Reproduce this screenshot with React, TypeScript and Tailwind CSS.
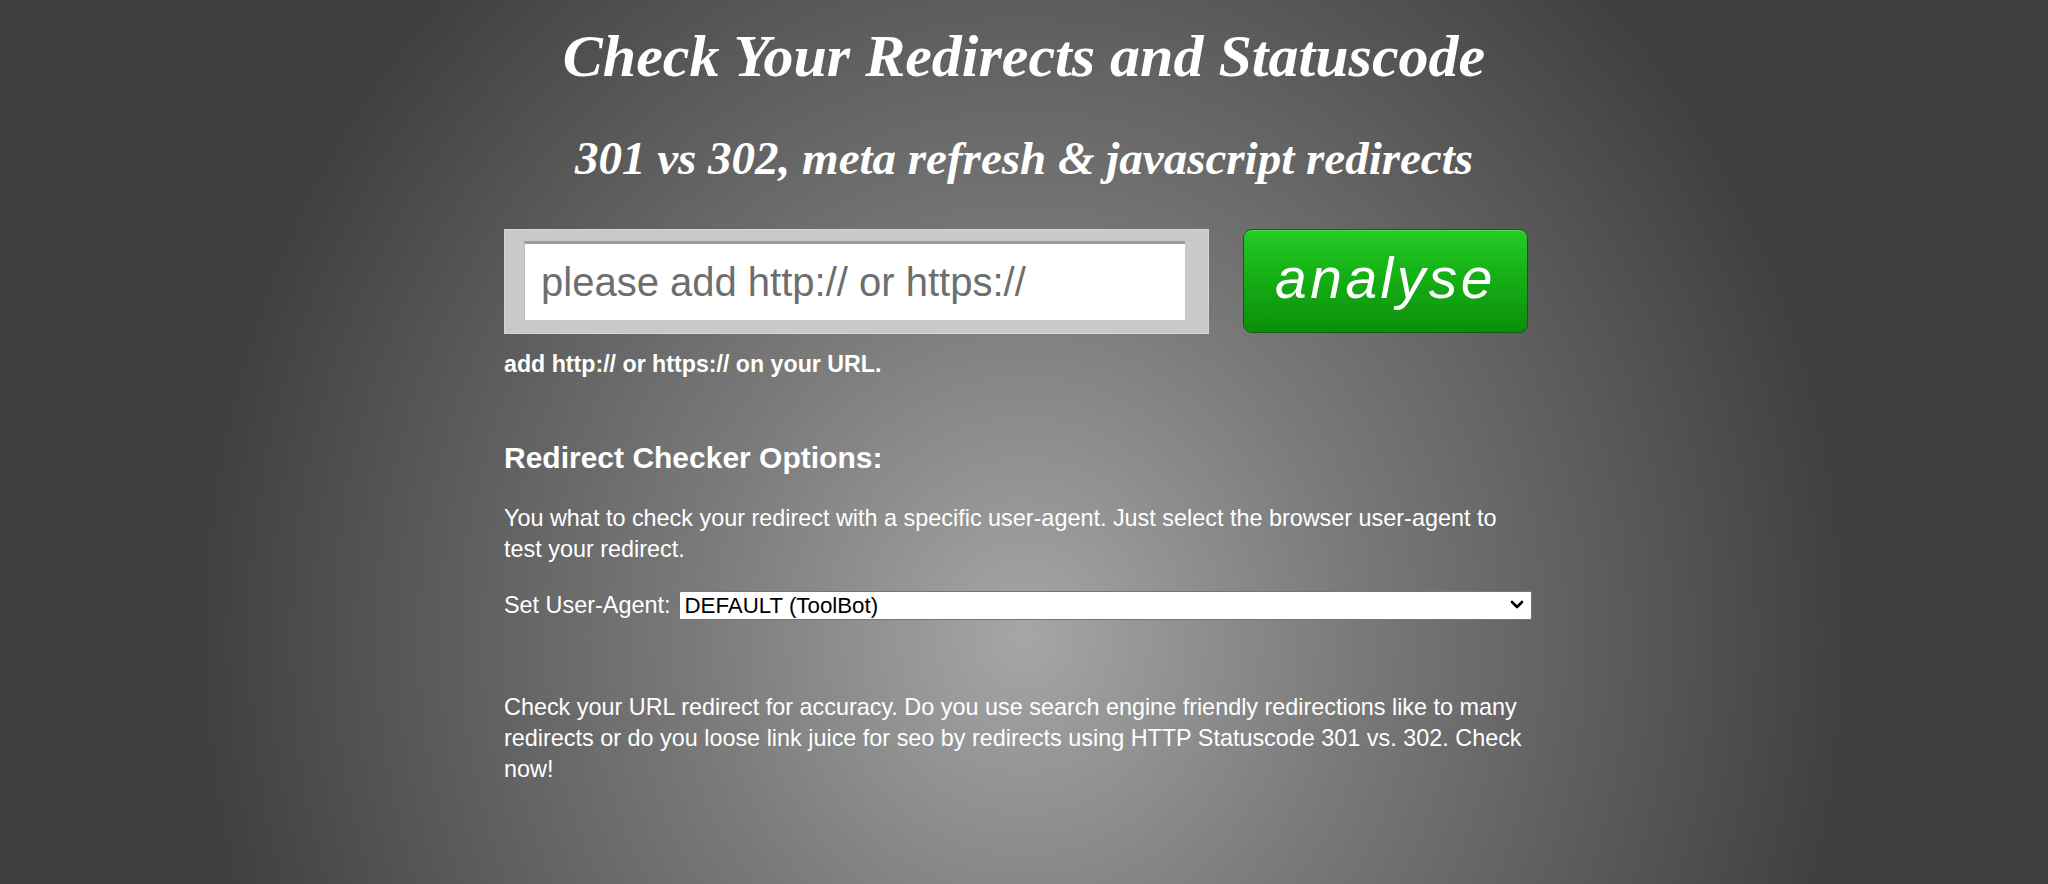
import React from "react";

export default function App() {
  return (
    <div
      className="min-h-[884px] w-full text-white"
      style={{
        background:
          "radial-gradient(ellipse 820px 900px at 50% 72%, #a6a6a6 0%, #7a7a7a 40%, #404040 100%)",
        fontFamily: '"Liberation Sans", Arial, sans-serif',
      }}
    >
      <div className="mx-auto w-[1040px] pt-[20px] pb-[80px]">
        <h1
          className="text-center text-[60px] leading-[72px] font-bold italic"
          style={{ fontFamily: '"Liberation Serif", "Times New Roman", serif' }}
        >
          Check Your Redirects and Statuscode
        </h1>
        <h2
          className="mt-[38px] text-center text-[47px] leading-[56px] font-bold italic"
          style={{ fontFamily: '"Liberation Serif", "Times New Roman", serif' }}
        >
          301 vs 302, meta refresh &amp; javascript redirects
        </h2>

        <div className="mt-[43px] flex items-start gap-[34px]">
          <div className="w-[705px] h-[105px] bg-[#c9c9c9] pl-[20px] pr-[24px] pt-[12px] pb-[14px] shadow-[inset_0_0_0_1px_#d6d6d6]">
            <input
              type="text"
              placeholder="please add http:// or https://"
              className="h-[79px] w-full bg-white border-t-[3px] border-[#9a9a9a] border-l border-l-[#bdbdbd] px-[16px] text-[40px] text-[#555] placeholder:text-[#6e6e6e] outline-none"
              style={{ fontFamily: '"Liberation Sans", Arial, sans-serif' }}
            />
          </div>
          <button
            className="w-[285px] h-[104px] rounded-[9px] border border-[#0d5e0d] text-white italic font-medium text-[57px] leading-[96px] tracking-[3.5px] pb-[6px] shadow-[inset_0_1px_0_#4fe04f]"
            style={{
              background: "linear-gradient(to bottom, #25cc25 0%, #15b015 45%, #0c8e0c 100%)",
              fontFamily: '"Liberation Sans", Arial, sans-serif',
            }}
          >
            analyse
          </button>
        </div>

        <p className="mt-[15px] text-[23.2px] leading-[30px] font-bold">
          add http:// or https:// on your URL.
        </p>

        <h3 className="mt-[61px] text-[30px] leading-[36px] font-bold">Redirect Checker Options:</h3>

        <p className="mt-[27px] max-w-[1030px] text-[23.4px] leading-[31px]">
          You what to check your redirect with a specific user-agent. Just select the browser user-agent to
          test your redirect.
        </p>

        <div className="mt-[25px] flex items-center gap-[9px] h-[31px]">
          <label className="text-[23.4px] leading-[31px] whitespace-nowrap">Set User-Agent:</label>
          <div className="relative w-[853px]">
            <select
              className="appearance-none w-full h-[29px] bg-white text-black text-[22.3px] leading-[27px] pl-[4px] pr-[30px] border border-[#767676] rounded-[2px] outline-none"
              style={{ fontFamily: '"Liberation Sans", Arial, sans-serif' }}
              defaultValue="default"
            >
              <option value="default">DEFAULT (ToolBot)</option>
              <option value="chrome">Google Chrome</option>
              <option value="firefox">Mozilla Firefox</option>
            </select>
            <svg
              className="pointer-events-none absolute right-[8px] top-[9px]"
              width="14"
              height="10"
              viewBox="0 0 14 10"
            >
              <path d="M2 2 L7 7 L12 2" stroke="#000" strokeWidth="2.6" fill="none" strokeLinecap="round" strokeLinejoin="round" />
            </svg>
          </div>
        </div>

        <p className="mt-[71px] max-w-[1030px] text-[23.4px] leading-[31px]">
          Check your URL redirect for accuracy. Do you use search engine friendly redirections like to many
          redirects or do you loose link juice for seo by redirects using HTTP Statuscode 301 vs. 302. Check
          now!
        </p>
      </div>
    </div>
  );
}
